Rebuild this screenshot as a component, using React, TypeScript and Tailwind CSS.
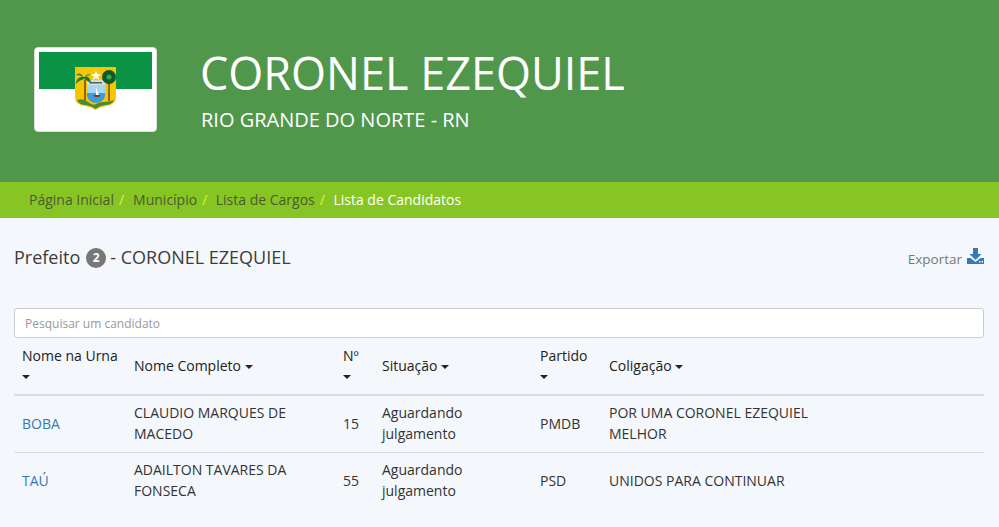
const OPEN_SANS = "font-['Open_Sans',sans-serif]";

const Caret = () => (
  <span className="inline-block w-0 h-0 align-middle border-t-[4px] border-t-[#222] border-x-[4px] border-x-transparent" />
);

const Flag = () => (
  <div className="w-[123px] h-[85px] bg-white border border-[#ddd] rounded p-1 shrink-0">
    <div className="relative w-full h-full">
      <div className="h-[37px] bg-[#0a9345]" />
      <svg className="absolute left-[36px] top-[15px]" width="41" height="44" viewBox="0 0 41 44">
        <path d="M0 0H41V30Q41 38 31 39Q24 40 20.500 43Q17 40 10 39Q0 38 0 30Z" fill="#f7c600" />
        <rect x="12" y="13" width="18" height="5" fill="#d5dcdc" />
        <rect x="15" y="15" width="12" height="1.500" fill="#4c6b4a" />
        <path d="M12 18H30V29Q29 35 21 36Q13 35 12 29Z" fill="#3f9cda" />
        <path d="M12 18H30V26H12Z" fill="#a9d5f0" />
        <path d="M21 20L24 28H21Z" fill="#fff" />
        <path d="M18.500 28H25.500L24 30H20Z" fill="#7a3b1d" />
        <rect x="9" y="13" width="2" height="21" fill="#8a6a1c" />
        <path d="M9 10C5 9 1 12 1 17C4 13 7 13 9 12C11 13 13 14 16 17C16 12 13 8 9 10Z" fill="#1c7a32" />
        <path d="M9 11C7 7 4 5 1 8C4 8 7 9 9 11C11 8 13 6 16 8C13 8 11 9 9 11Z" fill="#2a8a3c" />
        <path d="M21 3.500L22.300 7.200H26.300L23.100 9.500L24.300 13L21 10.900L17.700 13L18.900 9.500L15.700 7.200H19.700Z" fill="#fff" />
        <rect x="33" y="14" width="2" height="20" fill="#8a6a1c" />
        <circle cx="34" cy="10" r="7" fill="#0d5a26" />
        <circle cx="34" cy="10" r="2.500" fill="#3aa655" />
        <path d="M2 33Q8 31 13 35T21 37T29 35T39 33Q37 38 30 38Q24 39 20.500 42Q17 39 11 38Q4 38 2 33Z" fill="#4f8a30" />
      </svg>
    </div>
  </div>
);

const rows = [
  {
    urna: "BOBA",
    nome: "CLAUDIO MARQUES DE MACEDO",
    num: "15",
    situacao: "Aguardando julgamento",
    partido: "PMDB",
    coligacao: "POR UMA CORONEL EZEQUIEL MELHOR",
  },
  {
    urna: "TAÚ",
    nome: "ADAILTON TAVARES DA FONSECA",
    num: "55",
    situacao: "Aguardando julgamento",
    partido: "PSD",
    coligacao: "UNIDOS PARA CONTINUAR",
  },
];

const heads = ["Nome na Urna", "Nome Completo", "Nº", "Situação", "Partido", "Coligação"];
const widths = ["w-[112px]", "w-[209px]", "w-[39px]", "w-[158px]", "w-[69px]", "w-auto"];

export default function App() {
  return (
    <div className={`${OPEN_SANS} min-h-[527px] bg-[#f4f7fb] text-[14px] text-[#333]`}>
      <header className="h-[182px] bg-[#51974b] pl-[34px] pt-[47px] flex items-start gap-[44px]">
        <Flag />
        <div className="text-white pt-px">
          <h1 className="text-[45px] leading-[50px] font-medium -ml-px">CORONEL EZEQUIEL</h1>
          <p className="text-[20px] leading-[25px] mt-[9px]">RIO GRANDE DO NORTE - RN</p>
        </div>
      </header>

      <nav className="h-[36px] bg-[#87c524] pl-[29px] pb-[1px] flex items-center">
        <span className="text-[#4a5a33]">Página Inicial</span>
        <span className="text-[#d4f53c] px-[5px] mr-[4px]">/</span>
        <span className="text-[#4a5a33]">Município</span>
        <span className="text-[#d4f53c] px-[5px] mr-[3.500px]">/</span>
        <span className="text-[#4a5a33]">Lista de Cargos</span>
        <span className="text-[#d4f53c] px-[5px] mr-[3.500px]">/</span>
        <span className="text-white">Lista de Candidatos</span>
      </nav>

      <main className="pl-[14px] pr-[15px]">
        <div className="flex items-start justify-between pt-[27px] h-[90px]">
          <h2 className="text-[18px] leading-[25px] text-[#3c3c3c] flex items-center">
            Prefeito
            <span className="ml-[6px] mr-[4px] w-[20px] h-[20px] rounded-full bg-[#777] text-white text-[12px] font-bold flex items-center justify-center">
              2
            </span>
            - CORONEL EZEQUIEL
          </h2>
          <a className="flex items-center gap-[5px] text-[#777] text-[13.500px] mt-[4px]">
            Exportar
            <svg className="-mt-[6px]" width="17" height="16" viewBox="0 0 17 16" fill="#337ab7">
              <path d="M6 0H11V6H14.500L8.500 12L2.500 6H6Z" />
              <path d="M0 10H3.500L8.500 14L13.500 10H17V16H0Z" />
              <rect x="12" y="13" width="1.500" height="1.500" fill="#f4f7fb" />
              <rect x="14.500" y="13" width="1.500" height="1.500" fill="#f4f7fb" />
            </svg>
          </a>
        </div>

        <input
          placeholder="Pesquisar um candidato"
          className="block w-full h-[30px] bg-white border border-[#ccc] rounded-[3px] px-[10px] text-[12px] placeholder:text-[#999] outline-none"
        />

        <table className="w-full border-collapse table-fixed">
          <thead>
            <tr className="border-b-2 border-[#ddd]">
              {heads.map((h, i) => (
                <th key={h} className={`${widths[i]} px-2 py-2 text-left font-normal text-[#222] leading-[20px]`}>
                  {h} <Caret />
                </th>
              ))}
            </tr>
          </thead>
          <tbody>
            {rows.map((r) => (
              <tr key={r.urna} className="border-b border-[#ddd] last:border-b-0">
                <td className="px-2 pt-[6px] pb-2 leading-[21px] text-[#337ab7]">{r.urna}</td>
                <td className="px-2 pt-[6px] pb-2 leading-[21px]">{r.nome}</td>
                <td className="px-2 pt-[6px] pb-2 leading-[21px]">{r.num}</td>
                <td className="px-2 pt-[6px] pb-2 leading-[21px]">{r.situacao}</td>
                <td className="px-2 pt-[6px] pb-2 leading-[21px]">{r.partido}</td>
                <td className="px-2 pt-[6px] pb-2 leading-[21px]">
                  <div className="w-[240px]">{r.coligacao}</div>
                </td>
              </tr>
            ))}
          </tbody>
        </table>
      </main>
    </div>
  );
}
